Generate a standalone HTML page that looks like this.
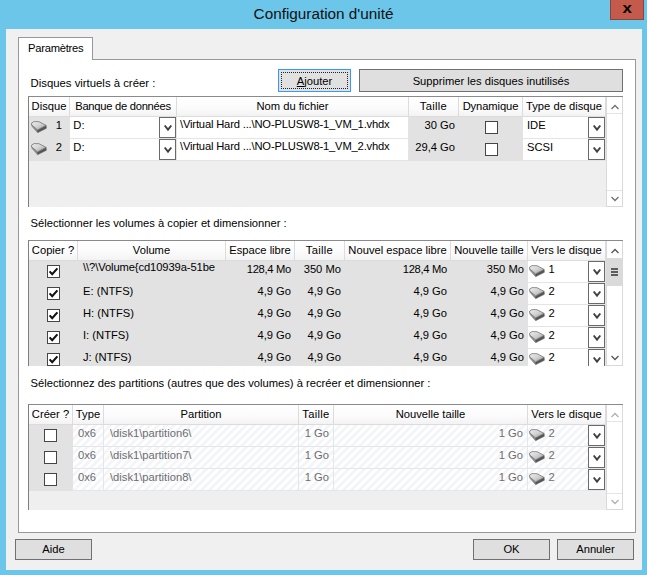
<!DOCTYPE html><html lang="fr"><head><meta charset="utf-8"><title>Configuration d'unité</title><style>
*{box-sizing:border-box;margin:0;padding:0}
html,body{width:647px;height:575px;overflow:hidden}
body{position:relative;background:#6bc6ea;font-family:"Liberation Sans",sans-serif;font-size:11.2px;color:#000;line-height:13px}
.abs{position:absolute}
#title{left:0;top:4px;width:647px;text-align:center;font-size:15.3px;line-height:20px;color:#111;letter-spacing:0}
#close{left:610px;top:0;width:34px;height:20px;background:#c45a4b;border:1px solid #8e4338;border-top:none;color:#000;text-align:center;font-weight:bold;font-size:15px;line-height:15px}
#client{left:6px;top:29px;width:636px;height:541px;background:#f0f0f0}
#page{left:18px;top:59px;width:618px;height:474px;background:#fff;border:1px solid #989898}
#tab{left:18px;top:37px;width:75px;height:23px;background:#fff;border:1px solid #989898;border-bottom:none}
#tab span{position:absolute;left:9px;top:4px;white-space:nowrap;letter-spacing:-0.24px}
.lbl{white-space:nowrap}
.btn{background:#dfdfdf;border:1px solid #707070;text-align:center;white-space:nowrap}
.btn span{position:absolute;left:0;right:0}
.grid{background:#efefef;border-left:1px solid #7f7f7f;border-top:1px solid #8a8a8a;overflow:hidden}
.hd{position:absolute;top:0;height:20px;background:linear-gradient(#ffffff,#fbfbfb 60%,#f3f3f3);border-right:1px solid #dcdcdc;border-bottom:1px solid #dcdcdc;white-space:nowrap;overflow:hidden}
.hd span{position:absolute;top:3px}
.cell{position:absolute;height:22px;white-space:nowrap;overflow:hidden}
.g{background:#e2e2e2}
.w{background:#fff;border-bottom:1px solid #e4e4e4;border-right:1px solid #e4e4e4}
.h{background:repeating-linear-gradient(135deg,#fff 0,#fff 3px,#f3f5f9 3px,#f3f5f9 5.66px);border-bottom:1px solid #e3e6ea;border-right:1px solid #e3e6ea;color:#6d6d6d}
.cell span{position:absolute;top:1.5px}
.r{right:4px}
.cb{position:absolute;top:4px;width:13px;height:13px;background:#fff;border:1px solid #454545}
.dd{position:absolute;top:0;width:17px;height:21px;background:#fff;border:1px solid #6a6a6a}
.sb{position:absolute;width:17px;background:#fff;border:1px solid #d9d9d9;border-top:none}
svg{position:absolute;overflow:visible}
</style></head><body>
<svg width="0" height="0" style="left:0;top:0"><defs><linearGradient id="dg" x1="0" y1="0" x2="1" y2="1"><stop offset="0" stop-color="#efefef"/><stop offset="0.5" stop-color="#d0d0d0"/><stop offset="1" stop-color="#989898"/></linearGradient></defs></svg>
<div id="title" class="abs">Configuration d'unité</div>
<div id="close" class="abs"><span style="display:inline-block;transform:scaleX(1.12)">x</span></div>
<div id="client" class="abs"></div>
<div id="page" class="abs"></div>
<div id="tab" class="abs"><span>Paramètres</span></div>
<div class="abs lbl" style="left:30.5px;top:77px;font-size:11.35px">Disques virtuels à créer :</div>
<div class="abs lbl" style="left:30.5px;top:217px">Sélectionner les volumes à copier et dimensionner :</div>
<div class="abs lbl" style="left:30.5px;top:377px">Sélectionnez des partitions (autres que des volumes) à recréer et dimensionner :</div>
<div class="abs btn" style="left:278px;top:69px;width:73px;height:23px;border-color:#3399ff;background:#e1e1e1"><div class="abs" style="left:2px;top:2px;right:2px;bottom:2px;border:1px dotted #222"></div><span style="top:4.5px"><u>A</u>jouter</span></div>
<div class="abs btn" style="left:359px;top:69px;width:264px;height:23px"><span style="top:4.5px">Supprimer les disques inutilisés</span></div>
<div class="abs btn" style="left:15px;top:539px;width:77px;height:21px"><span style="top:3px">Aide</span></div>
<div class="abs btn" style="left:473px;top:539px;width:77px;height:21px"><span style="top:3px">OK</span></div>
<div class="abs btn" style="left:557px;top:539px;width:77px;height:21px"><span style="top:3px">Annuler</span></div>
<div class="abs grid" style="left:28px;top:96px;width:595px;height:111px"><div class="hd" style="left:0px;width:41px;text-align:center"><span style="left:0;right:0;letter-spacing:0px">Disque</span></div><div class="hd" style="left:41px;width:107px;text-align:center"><span style="left:0;right:0;letter-spacing:-0.27px">Banque de données</span></div><div class="hd" style="left:148px;width:232px;text-align:center"><span style="left:0;right:0;letter-spacing:0px">Nom du fichier</span></div><div class="hd" style="left:380px;width:50px;text-align:center"><span style="left:0;right:0;letter-spacing:0.3px">Taille</span></div><div class="hd" style="left:430px;width:64px;text-align:center"><span style="left:0;right:0;letter-spacing:-0.1px">Dynamique</span></div><div class="hd" style="left:494px;width:83px;text-align:center"><span style="left:0;right:0;letter-spacing:0px">Type de disque</span></div><div class="cell g" style="left:0;top:20px;width:41px"><svg style="left:1.6px;top:3.5px" width="16" height="12" viewBox="0 0 16 12"><path d="M0.7 4 L6.6 8.9 L6.8 11.5 L5.8 11 L0.7 5 Z" fill="#8c8c8c" stroke="#808080" stroke-width="0.5" stroke-linejoin="round"/><path d="M6.6 8.9 L15.1 4.4 L15.3 7.3 L6.8 11.5 Z" fill="#555" stroke="#555" stroke-width="0.6" stroke-linejoin="round"/><path d="M0.6 2 L3 0.6 L8 0.7 L15.1 4.4 L6.6 8.9 L0.7 4 Z" fill="url(#dg)" stroke="#6e6e6e" stroke-width="0.75" stroke-linejoin="round"/></svg><span style="right:8px">1</span></div><div class="cell w" style="left:41px;top:20px;width:107px"><span style="left:3.3px;top:1.5px">D:</span><div class="dd" style="left:89px"><svg style="left:2.5px;top:6.300000000000001px" width="10" height="8" viewBox="0 0 10 8"><path d="M1.7 1.5 L5 5.7 L8.3 1.5" fill="none" stroke="#404040" stroke-width="1.9"/></svg></div></div><div class="cell w" style="left:148px;top:20px;width:232px"><span style="left:3px;top:0.5px;letter-spacing:-0.17px">\Virtual Hard ...\NO-PLUSW8-1_VM_1.vhdx</span></div><div class="cell g" style="left:380px;top:20px;width:50px"><span class="r">30 Go</span></div><div class="cell g" style="left:430px;top:20px;width:64px"><div class="cb" style="left:26px"></div></div><div class="cell w" style="left:494px;top:20px;width:83px"><span style="left:4px;top:1.5px">IDE</span><div class="dd" style="left:65px"><svg style="left:2.5px;top:6.300000000000001px" width="10" height="8" viewBox="0 0 10 8"><path d="M1.7 1.5 L5 5.7 L8.3 1.5" fill="none" stroke="#404040" stroke-width="1.9"/></svg></div></div><div class="cell g" style="left:0;top:42px;width:41px"><svg style="left:1.6px;top:3.5px" width="16" height="12" viewBox="0 0 16 12"><path d="M0.7 4 L6.6 8.9 L6.8 11.5 L5.8 11 L0.7 5 Z" fill="#8c8c8c" stroke="#808080" stroke-width="0.5" stroke-linejoin="round"/><path d="M6.6 8.9 L15.1 4.4 L15.3 7.3 L6.8 11.5 Z" fill="#555" stroke="#555" stroke-width="0.6" stroke-linejoin="round"/><path d="M0.6 2 L3 0.6 L8 0.7 L15.1 4.4 L6.6 8.9 L0.7 4 Z" fill="url(#dg)" stroke="#6e6e6e" stroke-width="0.75" stroke-linejoin="round"/></svg><span style="right:8px">2</span></div><div class="cell w" style="left:41px;top:42px;width:107px"><span style="left:3.3px;top:1.5px">D:</span><div class="dd" style="left:89px"><svg style="left:2.5px;top:6.300000000000001px" width="10" height="8" viewBox="0 0 10 8"><path d="M1.7 1.5 L5 5.7 L8.3 1.5" fill="none" stroke="#404040" stroke-width="1.9"/></svg></div></div><div class="cell w" style="left:148px;top:42px;width:232px"><span style="left:3px;top:0.5px;letter-spacing:-0.17px">\Virtual Hard ...\NO-PLUSW8-1_VM_2.vhdx</span></div><div class="cell g" style="left:380px;top:42px;width:50px"><span class="r">29,4 Go</span></div><div class="cell g" style="left:430px;top:42px;width:64px"><div class="cb" style="left:26px"></div></div><div class="cell w" style="left:494px;top:42px;width:83px"><span style="left:4px;top:1.5px">SCSI</span><div class="dd" style="left:65px"><svg style="left:2.5px;top:6.300000000000001px" width="10" height="8" viewBox="0 0 10 8"><path d="M1.7 1.5 L5 5.7 L8.3 1.5" fill="none" stroke="#404040" stroke-width="1.9"/></svg></div></div><div class="sb" style="left:577px;top:0;height:110px"><svg style="left:2.5px;top:6.5px" width="10" height="6" viewBox="0 0 10 6"><path d="M1.5 5 L5 1.5 L8.5 5" fill="none" stroke="#707070" stroke-width="1.3"/></svg><svg style="left:2.5px;top:98.5px" width="10" height="6" viewBox="0 0 10 6"><path d="M1.5 1 L5 4.5 L8.5 1" fill="none" stroke="#707070" stroke-width="1.3"/></svg><div class="abs" style="left:0;top:16px;width:15px;height:1px;background:#e4e4e4"></div><div class="abs" style="left:0;top:93px;width:15px;height:1px;background:#e4e4e4"></div></div></div>
<div class="abs grid" style="left:28px;top:240px;width:595px;height:126px"><div class="hd" style="left:0px;width:49px;text-align:center"><span style="left:0;right:0;letter-spacing:0px">Copier ?</span></div><div class="hd" style="left:49px;width:148px;text-align:center"><span style="left:0;right:0;letter-spacing:0px">Volume</span></div><div class="hd" style="left:197px;width:69px;text-align:center"><span style="left:0;right:0;letter-spacing:0px">Espace libre</span></div><div class="hd" style="left:266px;width:50px;text-align:center"><span style="left:0;right:0;letter-spacing:0.3px">Taille</span></div><div class="hd" style="left:316px;width:106px;text-align:center"><span style="left:0;right:0;letter-spacing:0px">Nouvel espace libre</span></div><div class="hd" style="left:422px;width:77px;text-align:center"><span style="left:0;right:0;letter-spacing:0px">Nouvelle taille</span></div><div class="hd" style="left:499px;width:78px;text-align:center"><span style="left:0;right:0;letter-spacing:0px">Vers le disque</span></div><div class="cell g" style="left:0;top:20px;width:49px"><div class="cb" style="left:18px"><svg style="left:-1px;top:-1px" width="13" height="13" viewBox="0 0 13 13"><path d="M2.6 6.4 L5.2 9.2 L10.4 3.4" fill="none" stroke="#111" stroke-width="2.1"/></svg></div></div><div class="cell g" style="left:49px;top:20px;width:148px"><span style="left:5px;top:0px;letter-spacing:-0.1px">\\?\Volume{cd10939a-51be</span></div><div class="cell g" style="left:197px;top:20px;width:69px"><span class="r" style="letter-spacing:-0.3px">128,4 Mo</span></div><div class="cell g" style="left:266px;top:20px;width:50px"><span class="r">350 Mo</span></div><div class="cell g" style="left:316px;top:20px;width:106px"><span class="r" style="letter-spacing:-0.3px">128,4 Mo</span></div><div class="cell g" style="left:422px;top:20px;width:77px"><span class="r">350 Mo</span></div><div class="cell w" style="left:499px;top:20px;width:78px"><svg style="left:0.5px;top:3.5px" width="16" height="12" viewBox="0 0 16 12"><path d="M0.7 4 L6.6 8.9 L6.8 11.5 L5.8 11 L0.7 5 Z" fill="#8c8c8c" stroke="#808080" stroke-width="0.5" stroke-linejoin="round"/><path d="M6.6 8.9 L15.1 4.4 L15.3 7.3 L6.8 11.5 Z" fill="#555" stroke="#555" stroke-width="0.6" stroke-linejoin="round"/><path d="M0.6 2 L3 0.6 L8 0.7 L15.1 4.4 L6.6 8.9 L0.7 4 Z" fill="url(#dg)" stroke="#6e6e6e" stroke-width="0.75" stroke-linejoin="round"/></svg><span style="left:20.5px">1</span><div class="dd" style="left:60px"><svg style="left:2.5px;top:6.300000000000001px" width="10" height="8" viewBox="0 0 10 8"><path d="M1.7 1.5 L5 5.7 L8.3 1.5" fill="none" stroke="#404040" stroke-width="1.9"/></svg></div></div><div class="cell g" style="left:0;top:42px;width:49px"><div class="cb" style="left:18px"><svg style="left:-1px;top:-1px" width="13" height="13" viewBox="0 0 13 13"><path d="M2.6 6.4 L5.2 9.2 L10.4 3.4" fill="none" stroke="#111" stroke-width="2.1"/></svg></div></div><div class="cell g" style="left:49px;top:42px;width:148px"><span style="left:5px;top:1.5px;letter-spacing:0px">E: (NTFS)</span></div><div class="cell g" style="left:197px;top:42px;width:69px"><span class="r" style="letter-spacing:0px">4,9 Go</span></div><div class="cell g" style="left:266px;top:42px;width:50px"><span class="r">4,9 Go</span></div><div class="cell g" style="left:316px;top:42px;width:106px"><span class="r" style="letter-spacing:0px">4,9 Go</span></div><div class="cell g" style="left:422px;top:42px;width:77px"><span class="r">4,9 Go</span></div><div class="cell w" style="left:499px;top:42px;width:78px"><svg style="left:0.5px;top:3.5px" width="16" height="12" viewBox="0 0 16 12"><path d="M0.7 4 L6.6 8.9 L6.8 11.5 L5.8 11 L0.7 5 Z" fill="#8c8c8c" stroke="#808080" stroke-width="0.5" stroke-linejoin="round"/><path d="M6.6 8.9 L15.1 4.4 L15.3 7.3 L6.8 11.5 Z" fill="#555" stroke="#555" stroke-width="0.6" stroke-linejoin="round"/><path d="M0.6 2 L3 0.6 L8 0.7 L15.1 4.4 L6.6 8.9 L0.7 4 Z" fill="url(#dg)" stroke="#6e6e6e" stroke-width="0.75" stroke-linejoin="round"/></svg><span style="left:20.5px">2</span><div class="dd" style="left:60px"><svg style="left:2.5px;top:6.300000000000001px" width="10" height="8" viewBox="0 0 10 8"><path d="M1.7 1.5 L5 5.7 L8.3 1.5" fill="none" stroke="#404040" stroke-width="1.9"/></svg></div></div><div class="cell g" style="left:0;top:64px;width:49px"><div class="cb" style="left:18px"><svg style="left:-1px;top:-1px" width="13" height="13" viewBox="0 0 13 13"><path d="M2.6 6.4 L5.2 9.2 L10.4 3.4" fill="none" stroke="#111" stroke-width="2.1"/></svg></div></div><div class="cell g" style="left:49px;top:64px;width:148px"><span style="left:5px;top:1.5px;letter-spacing:0px">H: (NTFS)</span></div><div class="cell g" style="left:197px;top:64px;width:69px"><span class="r" style="letter-spacing:0px">4,9 Go</span></div><div class="cell g" style="left:266px;top:64px;width:50px"><span class="r">4,9 Go</span></div><div class="cell g" style="left:316px;top:64px;width:106px"><span class="r" style="letter-spacing:0px">4,9 Go</span></div><div class="cell g" style="left:422px;top:64px;width:77px"><span class="r">4,9 Go</span></div><div class="cell w" style="left:499px;top:64px;width:78px"><svg style="left:0.5px;top:3.5px" width="16" height="12" viewBox="0 0 16 12"><path d="M0.7 4 L6.6 8.9 L6.8 11.5 L5.8 11 L0.7 5 Z" fill="#8c8c8c" stroke="#808080" stroke-width="0.5" stroke-linejoin="round"/><path d="M6.6 8.9 L15.1 4.4 L15.3 7.3 L6.8 11.5 Z" fill="#555" stroke="#555" stroke-width="0.6" stroke-linejoin="round"/><path d="M0.6 2 L3 0.6 L8 0.7 L15.1 4.4 L6.6 8.9 L0.7 4 Z" fill="url(#dg)" stroke="#6e6e6e" stroke-width="0.75" stroke-linejoin="round"/></svg><span style="left:20.5px">2</span><div class="dd" style="left:60px"><svg style="left:2.5px;top:6.300000000000001px" width="10" height="8" viewBox="0 0 10 8"><path d="M1.7 1.5 L5 5.7 L8.3 1.5" fill="none" stroke="#404040" stroke-width="1.9"/></svg></div></div><div class="cell g" style="left:0;top:86px;width:49px"><div class="cb" style="left:18px"><svg style="left:-1px;top:-1px" width="13" height="13" viewBox="0 0 13 13"><path d="M2.6 6.4 L5.2 9.2 L10.4 3.4" fill="none" stroke="#111" stroke-width="2.1"/></svg></div></div><div class="cell g" style="left:49px;top:86px;width:148px"><span style="left:5px;top:1.5px;letter-spacing:0px">I: (NTFS)</span></div><div class="cell g" style="left:197px;top:86px;width:69px"><span class="r" style="letter-spacing:0px">4,9 Go</span></div><div class="cell g" style="left:266px;top:86px;width:50px"><span class="r">4,9 Go</span></div><div class="cell g" style="left:316px;top:86px;width:106px"><span class="r" style="letter-spacing:0px">4,9 Go</span></div><div class="cell g" style="left:422px;top:86px;width:77px"><span class="r">4,9 Go</span></div><div class="cell w" style="left:499px;top:86px;width:78px"><svg style="left:0.5px;top:3.5px" width="16" height="12" viewBox="0 0 16 12"><path d="M0.7 4 L6.6 8.9 L6.8 11.5 L5.8 11 L0.7 5 Z" fill="#8c8c8c" stroke="#808080" stroke-width="0.5" stroke-linejoin="round"/><path d="M6.6 8.9 L15.1 4.4 L15.3 7.3 L6.8 11.5 Z" fill="#555" stroke="#555" stroke-width="0.6" stroke-linejoin="round"/><path d="M0.6 2 L3 0.6 L8 0.7 L15.1 4.4 L6.6 8.9 L0.7 4 Z" fill="url(#dg)" stroke="#6e6e6e" stroke-width="0.75" stroke-linejoin="round"/></svg><span style="left:20.5px">2</span><div class="dd" style="left:60px"><svg style="left:2.5px;top:6.300000000000001px" width="10" height="8" viewBox="0 0 10 8"><path d="M1.7 1.5 L5 5.7 L8.3 1.5" fill="none" stroke="#404040" stroke-width="1.9"/></svg></div></div><div class="cell g" style="left:0;top:108px;width:49px"><div class="cb" style="left:18px"><svg style="left:-1px;top:-1px" width="13" height="13" viewBox="0 0 13 13"><path d="M2.6 6.4 L5.2 9.2 L10.4 3.4" fill="none" stroke="#111" stroke-width="2.1"/></svg></div></div><div class="cell g" style="left:49px;top:108px;width:148px"><span style="left:5px;top:1.5px;letter-spacing:0px">J: (NTFS)</span></div><div class="cell g" style="left:197px;top:108px;width:69px"><span class="r" style="letter-spacing:0px">4,9 Go</span></div><div class="cell g" style="left:266px;top:108px;width:50px"><span class="r">4,9 Go</span></div><div class="cell g" style="left:316px;top:108px;width:106px"><span class="r" style="letter-spacing:0px">4,9 Go</span></div><div class="cell g" style="left:422px;top:108px;width:77px"><span class="r">4,9 Go</span></div><div class="cell w" style="left:499px;top:108px;width:78px"><svg style="left:0.5px;top:3.5px" width="16" height="12" viewBox="0 0 16 12"><path d="M0.7 4 L6.6 8.9 L6.8 11.5 L5.8 11 L0.7 5 Z" fill="#8c8c8c" stroke="#808080" stroke-width="0.5" stroke-linejoin="round"/><path d="M6.6 8.9 L15.1 4.4 L15.3 7.3 L6.8 11.5 Z" fill="#555" stroke="#555" stroke-width="0.6" stroke-linejoin="round"/><path d="M0.6 2 L3 0.6 L8 0.7 L15.1 4.4 L6.6 8.9 L0.7 4 Z" fill="url(#dg)" stroke="#6e6e6e" stroke-width="0.75" stroke-linejoin="round"/></svg><span style="left:20.5px">2</span><div class="dd" style="left:60px"><svg style="left:2.5px;top:6.300000000000001px" width="10" height="8" viewBox="0 0 10 8"><path d="M1.7 1.5 L5 5.7 L8.3 1.5" fill="none" stroke="#404040" stroke-width="1.9"/></svg></div></div><div class="sb" style="left:577px;top:0;height:125px"><svg style="left:2.5px;top:6.5px" width="10" height="6" viewBox="0 0 10 6"><path d="M1.5 5 L5 1.5 L8.5 5" fill="none" stroke="#555555" stroke-width="1.3"/></svg><svg style="left:2.5px;top:113.5px" width="10" height="6" viewBox="0 0 10 6"><path d="M1.5 1 L5 4.5 L8.5 1" fill="none" stroke="#555555" stroke-width="1.3"/></svg><div class="abs" style="left:0;top:17px;width:15px;height:28px;background:#dadada"><div class="abs" style="left:4px;top:10px;width:7px;height:2px;background:#5e5e5e"></div><div class="abs" style="left:4px;top:13px;width:7px;height:2px;background:#5e5e5e"></div><div class="abs" style="left:4px;top:16px;width:7px;height:2px;background:#5e5e5e"></div></div></div></div>
<div class="abs grid" style="left:28px;top:404px;width:595px;height:106px"><div class="hd" style="left:0px;width:44px;text-align:center"><span style="left:0;right:0;letter-spacing:0px">Créer ?</span></div><div class="hd" style="left:44px;width:31px;text-align:center"><span style="left:0;right:0;letter-spacing:0px">Type</span></div><div class="hd" style="left:75px;width:195px;text-align:center"><span style="left:0;right:0;letter-spacing:0px">Partition</span></div><div class="hd" style="left:270px;width:35px;text-align:center"><span style="left:0;right:0;letter-spacing:0.3px">Taille</span></div><div class="hd" style="left:305px;width:194px;text-align:center"><span style="left:0;right:0;letter-spacing:0px">Nouvelle taille</span></div><div class="hd" style="left:499px;width:78px;text-align:center"><span style="left:0;right:0;letter-spacing:0px">Vers le disque</span></div><div class="cell g" style="left:0;top:20px;width:44px"><div class="cb" style="left:15px"></div></div><div class="cell h" style="left:44px;top:20px;width:31px"><span style="left:5px">0x6</span></div><div class="cell h" style="left:75px;top:20px;width:195px"><span style="left:6px">\disk1\partition6\</span></div><div class="cell h" style="left:270px;top:20px;width:35px"><span class="r">1 Go</span></div><div class="cell h" style="left:305px;top:20px;width:194px"><span class="r">1 Go</span></div><div class="cell h" style="left:499px;top:20px;width:78px"><svg style="left:0.5px;top:3.5px" width="16" height="12" viewBox="0 0 16 12"><path d="M0.7 4 L6.6 8.9 L6.8 11.5 L5.8 11 L0.7 5 Z" fill="#8c8c8c" stroke="#808080" stroke-width="0.5" stroke-linejoin="round"/><path d="M6.6 8.9 L15.1 4.4 L15.3 7.3 L6.8 11.5 Z" fill="#555" stroke="#555" stroke-width="0.6" stroke-linejoin="round"/><path d="M0.6 2 L3 0.6 L8 0.7 L15.1 4.4 L6.6 8.9 L0.7 4 Z" fill="url(#dg)" stroke="#6e6e6e" stroke-width="0.75" stroke-linejoin="round"/></svg><span style="left:20.5px">2</span><div class="dd" style="left:60px"><svg style="left:2.5px;top:6.300000000000001px" width="10" height="8" viewBox="0 0 10 8"><path d="M1.7 1.5 L5 5.7 L8.3 1.5" fill="none" stroke="#404040" stroke-width="1.9"/></svg></div></div><div class="cell g" style="left:0;top:42px;width:44px"><div class="cb" style="left:15px"></div></div><div class="cell h" style="left:44px;top:42px;width:31px"><span style="left:5px">0x6</span></div><div class="cell h" style="left:75px;top:42px;width:195px"><span style="left:6px">\disk1\partition7\</span></div><div class="cell h" style="left:270px;top:42px;width:35px"><span class="r">1 Go</span></div><div class="cell h" style="left:305px;top:42px;width:194px"><span class="r">1 Go</span></div><div class="cell h" style="left:499px;top:42px;width:78px"><svg style="left:0.5px;top:3.5px" width="16" height="12" viewBox="0 0 16 12"><path d="M0.7 4 L6.6 8.9 L6.8 11.5 L5.8 11 L0.7 5 Z" fill="#8c8c8c" stroke="#808080" stroke-width="0.5" stroke-linejoin="round"/><path d="M6.6 8.9 L15.1 4.4 L15.3 7.3 L6.8 11.5 Z" fill="#555" stroke="#555" stroke-width="0.6" stroke-linejoin="round"/><path d="M0.6 2 L3 0.6 L8 0.7 L15.1 4.4 L6.6 8.9 L0.7 4 Z" fill="url(#dg)" stroke="#6e6e6e" stroke-width="0.75" stroke-linejoin="round"/></svg><span style="left:20.5px">2</span><div class="dd" style="left:60px"><svg style="left:2.5px;top:6.300000000000001px" width="10" height="8" viewBox="0 0 10 8"><path d="M1.7 1.5 L5 5.7 L8.3 1.5" fill="none" stroke="#404040" stroke-width="1.9"/></svg></div></div><div class="cell g" style="left:0;top:64px;width:44px"><div class="cb" style="left:15px"></div></div><div class="cell h" style="left:44px;top:64px;width:31px"><span style="left:5px">0x6</span></div><div class="cell h" style="left:75px;top:64px;width:195px"><span style="left:6px">\disk1\partition8\</span></div><div class="cell h" style="left:270px;top:64px;width:35px"><span class="r">1 Go</span></div><div class="cell h" style="left:305px;top:64px;width:194px"><span class="r">1 Go</span></div><div class="cell h" style="left:499px;top:64px;width:78px"><svg style="left:0.5px;top:3.5px" width="16" height="12" viewBox="0 0 16 12"><path d="M0.7 4 L6.6 8.9 L6.8 11.5 L5.8 11 L0.7 5 Z" fill="#8c8c8c" stroke="#808080" stroke-width="0.5" stroke-linejoin="round"/><path d="M6.6 8.9 L15.1 4.4 L15.3 7.3 L6.8 11.5 Z" fill="#555" stroke="#555" stroke-width="0.6" stroke-linejoin="round"/><path d="M0.6 2 L3 0.6 L8 0.7 L15.1 4.4 L6.6 8.9 L0.7 4 Z" fill="url(#dg)" stroke="#6e6e6e" stroke-width="0.75" stroke-linejoin="round"/></svg><span style="left:20.5px">2</span><div class="dd" style="left:60px"><svg style="left:2.5px;top:6.300000000000001px" width="10" height="8" viewBox="0 0 10 8"><path d="M1.7 1.5 L5 5.7 L8.3 1.5" fill="none" stroke="#404040" stroke-width="1.9"/></svg></div></div><div class="sb" style="left:577px;top:0;height:105px"><svg style="left:2.5px;top:6.5px" width="10" height="6" viewBox="0 0 10 6"><path d="M1.5 5 L5 1.5 L8.5 5" fill="none" stroke="#b0b0b0" stroke-width="1.3"/></svg><svg style="left:2.5px;top:93.5px" width="10" height="6" viewBox="0 0 10 6"><path d="M1.5 1 L5 4.5 L8.5 1" fill="none" stroke="#b0b0b0" stroke-width="1.3"/></svg><div class="abs" style="left:0;top:16px;width:15px;height:1px;background:#e4e4e4"></div><div class="abs" style="left:0;top:88px;width:15px;height:1px;background:#e4e4e4"></div></div></div>
</body></html>
